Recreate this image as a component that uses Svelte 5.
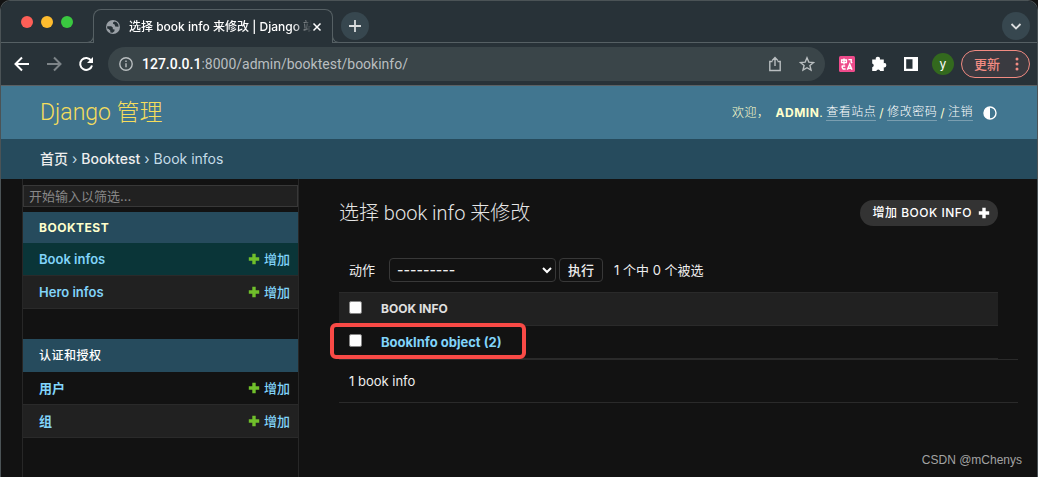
<script lang="ts">
    type Model = { name: string; active?: boolean };
    type AppGroup = { title: string; models: Model[] };

    const apps: AppGroup[] = [
        {
            title: "Booktest",
            models: [{ name: "Book infos", active: true }, { name: "Hero infos" }],
        },
        {
            title: "认证和授权",
            models: [{ name: "用户" }, { name: "组" }],
        },
    ];

    const rows = [{ id: 2, label: "BookInfo object (2)" }];

    let filter = $state("");
    let action = $state("");
    let selected = $state<number[]>([]);

    const allSelected = $derived(selected.length === rows.length);

    function toggleAll() {
        selected = allSelected ? [] : rows.map((row) => row.id);
    }
</script>

{#snippet plus()}
    <svg class="plus" viewBox="0 0 12 12" aria-hidden="true">
        <path d="M4.3.8h3.4v3.5h3.5v3.4H7.7v3.5H4.3V7.7H.8V4.3h3.5z" />
    </svg>
{/snippet}

<div class="window">
    <div class="tab-strip">
        <div class="lights">
            <span class="light close"></span>
            <span class="light minimize"></span>
            <span class="light zoom"></span>
        </div>
        <div class="tab">
            <svg class="globe" viewBox="0 0 16 16" aria-hidden="true">
                <circle cx="8" cy="8" r="7" fill="#9aa0a6" />
                <path
                    d="M2.2 7.2h4l1.6 1.4v1.6l1.8.4-.2 1.6-1.8 1.6-2.2-.4-.2-1.8-1.6-1.6-1.4-.6zM9.6 2.4L8 3.4v1.4l1.6.8.6 1.8 3.4.4-.4-2.6-1.6-2z"
                    fill="#283238"
                />
            </svg>
            <span class="tab-title">选择 book info 来修改 | Django 站</span>
            <button class="tab-close" type="button" aria-label="Close tab">
                <svg viewBox="0 0 10 10"><path d="M1.5 1.5l7 7M8.5 1.5l-7 7" /></svg>
            </button>
        </div>
        <button class="round" type="button" aria-label="New tab">
            <svg viewBox="0 0 14 14"><path d="M7 1v12M1 7h12" /></svg>
        </button>
        <button class="round search-tabs" type="button" aria-label="Search tabs">
            <svg viewBox="0 0 14 14"><path d="M2.5 5L7 9.5 11.5 5" /></svg>
        </button>
    </div>

    <div class="toolbar">
        <button class="nav" type="button" aria-label="Back">
            <svg viewBox="0 0 16 16"><path d="M15 8H2M8 1.5L1.5 8 8 14.5" /></svg>
        </button>
        <button class="nav dim" type="button" aria-label="Forward">
            <svg viewBox="0 0 16 16"><path d="M1 8h13M8 1.5L14.5 8 8 14.5" /></svg>
        </button>
        <button class="nav" type="button" aria-label="Reload">
            <svg viewBox="0 0 16 16">
                <path d="M13.2 4.6A6 6 0 1 0 14 9.4" />
                <path class="solid" d="M15 1v6H9z" />
            </svg>
        </button>

        <div class="address">
            <svg class="info" viewBox="0 0 14 14" aria-hidden="true">
                <circle cx="7" cy="7" r="6.2" />
                <path d="M7 6.2v4M7 3.4v1.5" />
            </svg>
            <span class="url"><b>127.0.0.1</b>:8000/admin/booktest/bookinfo/</span>
            <button class="share" type="button" aria-label="Share">
                <svg viewBox="0 0 14 16">
                    <path d="M4.5 5.5H1.8v9h10.4v-9H9.5M7 10V2M4.2 4.4L7 1.6l2.8 2.8" />
                </svg>
            </button>
            <button class="star" type="button" aria-label="Bookmark">
                <svg viewBox="0 0 16 16">
                    <path
                        d="M8 1.8l1.8 4.3 4.7.4-3.6 3 1.1 4.6L8 11.7 4 14.1l1.1-4.6-3.6-3 4.7-.4z"
                    />
                </svg>
            </button>
        </div>

        <button class="ext" type="button" aria-label="Translate">
            <svg viewBox="0 0 16 16">
                <rect width="16" height="16" rx="1.5" fill="#ee4b8b" />
                <path
                    d="M2.6 4h4.8v2.6H2.6zM5 2.4v6M9.4 3.6h2.8v2.6l1 .8M3.2 9.4v2.2l1 1.4h2.4M3.2 10h3M8.4 13.8l2.3-5.6 2.3 5.6M9.4 12.2h2.8"
                    fill="none"
                    stroke="#fff"
                    stroke-width="1.4"
                />
            </svg>
        </button>
        <button class="ext" type="button" aria-label="Extensions">
            <svg viewBox="0 0 16 16">
                <path
                    d="M1.2 3.4h3.6a2.1 2.1 0 1 1 4.1 0h3.9v3.8a2.1 2.1 0 1 1 0 4.1V15H9.2a2 2 0 0 0-3.9 0H1.2v-3.7a2 2 0 0 0 0-3.9z"
                    fill="#fff"
                />
            </svg>
        </button>
        <button class="ext" type="button" aria-label="Side panel">
            <svg viewBox="0 0 16 16">
                <path d="M1 1h14v14H1zM3.2 3.2v9.6h6.3V3.2z" fill="#fff" fill-rule="evenodd" />
            </svg>
        </button>
        <button class="avatar" type="button">y</button>
        <button class="update" type="button">
            更新
            <svg viewBox="0 0 4 14" aria-hidden="true">
                <circle cx="2" cy="2" r="1.5" />
                <circle cx="2" cy="7" r="1.5" />
                <circle cx="2" cy="12" r="1.5" />
            </svg>
        </button>
    </div>

    <header>
        <a class="brand" href="#home">Django 管理</a>
        <div class="user-tools">
            <span class="welcome">欢迎，</span>
            <strong>Admin</strong>.
            <a href="#site">查看站点</a> /
            <a href="#password">修改密码</a> /
            <a href="#logout">注销</a>
            <button class="theme" type="button" aria-label="Toggle theme">
                <svg viewBox="0 0 14 14">
                    <circle cx="7" cy="7" r="6" fill="none" stroke="#fff" stroke-width="1.4" />
                    <path d="M7 1a6 6 0 0 0 0 12z" fill="#fff" />
                </svg>
            </button>
        </div>
    </header>

    <nav class="breadcrumbs">
        <a href="#home">首页</a> › <a href="#booktest">Booktest</a> › Book infos
    </nav>

    <div class="main">
        <aside>
            <input
                class="filter"
                type="search"
                placeholder="开始输入以筛选..."
                aria-label="筛选导航项"
                bind:value={filter}
            />
            {#each apps as app}
                <table class="module">
                    <caption>{app.title}</caption>
                    <tbody>
                        {#each app.models as model}
                            <tr class:active={model.active}>
                                <th scope="row"><a href="#model">{model.name}</a></th>
                                <td><a href="#add">{@render plus()}增加</a></td>
                            </tr>
                        {/each}
                    </tbody>
                </table>
            {/each}
        </aside>

        <main>
            <div class="title-row">
                <h1>选择 book info 来修改</h1>
                <a class="add-link" href="#add">增加 book info {@render plus()}</a>
            </div>

            <div class="actions">
                <label for="action">动作</label>
                <div class="select-wrap">
                    <select id="action" bind:value={action}>
                        <option value="">---------</option>
                        <option value="delete">删除所选的 book infos</option>
                    </select>
                    <svg viewBox="0 0 10 8" aria-hidden="true"><path d="M1 2l4 4 4-4" /></svg>
                </div>
                <button type="button">执行</button>
                <span class="counter">{rows.length} 个中 {selected.length} 个被选</span>
            </div>

            <table class="results">
                <thead>
                    <tr>
                        <th class="check">
                            <input
                                type="checkbox"
                                aria-label="全选"
                                checked={allSelected}
                                onchange={toggleAll}
                            />
                        </th>
                        <th>Book info</th>
                    </tr>
                </thead>
                <tbody>
                    {#each rows as row}
                        <tr>
                            <td class="check">
                                <input
                                    type="checkbox"
                                    aria-label={row.label}
                                    value={row.id}
                                    bind:group={selected}
                                />
                                <span class="marker"></span>
                            </td>
                            <th><a href="#change">{row.label}</a></th>
                        </tr>
                    {/each}
                </tbody>
            </table>
            <p class="paginator">{rows.length} book info</p>
        </main>
    </div>
    <span class="watermark">CSDN @mChenys</span>
</div>

<style>
    :global(body) {
        background: #121212;
    }

    .window {
        position: relative;
        box-sizing: border-box;
        display: flex;
        flex-direction: column;
        min-height: 100vh;
        overflow: hidden;
        border: 1px solid #4b5356;
        border-bottom: 0;
        border-radius: 10px 10px 0 0;
        background: #121212;
        color: #eee;
        font-family: Inter, "Noto Sans CJK SC", sans-serif;
        font-size: 13px;
        line-height: 20px;
    }

    a {
        color: #81d4fa;
        text-decoration: none;
    }

    button {
        padding: 0;
        border: 0;
        background: none;
        color: inherit;
        font: inherit;
        cursor: pointer;
    }

    svg {
        display: block;
        flex: none;
    }

    /* browser chrome */
    .tab-strip {
        display: flex;
        align-items: flex-end;
        height: 42px;
        box-shadow: inset 0 -1px #566064;
        background: #283238;
    }

    .lights {
        display: flex;
        gap: 8px;
        padding: 0 20px 15px;
    }

    .light {
        width: 12px;
        height: 12px;
        border-radius: 50%;
    }

    .close {
        background: #fe5f57;
    }

    .minimize {
        background: #febc2e;
    }

    .zoom {
        background: #3ac840;
    }

    .tab {
        position: relative;
        box-sizing: border-box;
        display: flex;
        align-items: center;
        width: 240px;
        height: 34px;
        padding: 0 10px 0 11px;
        border: 1px solid #566064;
        border-bottom: 0;
        border-radius: 8px 8px 0 0;
        background: #283238;
    }

    .tab::before,
    .tab::after {
        position: absolute;
        bottom: 0;
        width: 7px;
        height: 7px;
        border-bottom: 1px solid #566064;
        background: #283238;
        content: "";
    }

    .tab::before {
        right: 100%;
        border-right: 1px solid #566064;
        border-bottom-right-radius: 7px;
    }

    .tab::after {
        left: 100%;
        border-left: 1px solid #566064;
        border-bottom-left-radius: 7px;
    }

    .globe {
        width: 16px;
        height: 16px;
        margin-right: 8px;
    }

    .tab-title {
        flex: 1;
        min-width: 0;
        color: #fff;
        font-size: 12px;
        font-weight: 500;
        white-space: nowrap;
        mask-image: linear-gradient(to right, #000 calc(100% - 20px), transparent);
    }

    .tab-close svg {
        width: 10px;
        height: 10px;
        fill: none;
        stroke: #fff;
        stroke-width: 1.5;
    }

    .round {
        display: grid;
        place-items: center;
        width: 28px;
        height: 28px;
        margin: 0 7px 3px 8px;
        border-radius: 50%;
        background: #37474f;
    }

    .round svg {
        width: 14px;
        height: 14px;
        fill: none;
        stroke: #dadcdd;
        stroke-width: 1.8;
    }

    .search-tabs {
        margin-left: auto;
    }

    .toolbar {
        display: flex;
        align-items: center;
        height: 42px;
        padding: 0 7px 0 13px;
        border-bottom: 1px solid #5b6063;
        background: #283238;
    }

    .nav {
        margin-right: 16px;
    }

    .nav svg {
        width: 16px;
        height: 16px;
        fill: none;
        stroke: #fff;
        stroke-width: 2;
    }

    .nav .solid {
        fill: #fff;
        stroke: none;
    }

    .dim svg {
        stroke: #7d8488;
    }

    .address {
        display: flex;
        flex: 1;
        align-items: center;
        height: 34px;
        margin: 0 14px 0 -2px;
        padding: 0 10px 0 11px;
        border-radius: 17px;
        background: #3a4549;
    }

    .address svg {
        fill: none;
        stroke: #b9bec0;
        stroke-width: 1.4;
    }

    .info {
        width: 14px;
        height: 14px;
        margin-right: 9px;
    }

    .url {
        flex: 1;
        color: #b9bec0;
        font-family: Roboto, "Noto Sans CJK SC", sans-serif;
        font-size: 14px;
    }

    .url b {
        color: #fff;
        font-weight: 500;
    }

    .share svg {
        width: 14px;
        height: 16px;
        margin-right: 17px;
    }

    .star svg {
        width: 16px;
        height: 16px;
    }

    .ext {
        margin-right: 16px;
    }

    .ext svg {
        width: 16px;
        height: 16px;
    }

    .avatar {
        width: 22px;
        height: 22px;
        margin: 0 7px 0 -3px;
        border-radius: 50%;
        background: #33691e;
        color: #fff;
        font-size: 12px;
        line-height: 20px;
    }

    .update {
        display: flex;
        align-items: center;
        gap: 15px;
        height: 28px;
        padding: 0 10px 0 12px;
        border: 1px solid #f28b82;
        border-radius: 14px;
        background: #3a3a40;
        color: #f28b82;
        font-weight: 500;
    }

    .update svg {
        width: 4px;
        height: 14px;
        fill: #f28b82;
    }

    /* site header */
    header {
        display: flex;
        align-items: center;
        justify-content: space-between;
        height: 53px;
        padding: 0 40px 0 39px;
        background: #417690;
    }

    .brand {
        color: #f5dd5d;
        font-family: Roboto, "Noto Sans CJK SC", sans-serif;
        font-size: 23px;
        font-weight: 300;
        line-height: 28px;
    }

    .user-tools {
        display: flex;
        align-items: center;
        gap: 3px;
        color: #ffc;
        font-size: 12px;
        letter-spacing: 0.5px;
    }

    .user-tools strong {
        margin-right: -3px;
        text-transform: uppercase;
    }

    .welcome {
        font-weight: 300;
        margin-right: 3px;
    }

    .user-tools a {
        border-bottom: 1px solid #7a9eb0;
        color: #fff;
        font-weight: 300;
        line-height: 16px;
    }

    .theme svg {
        width: 14px;
        height: 14px;
        margin-left: 7px;
    }

    .breadcrumbs {
        height: 20px;
        padding: 10px 39px;
        background: #264b5d;
        color: #c4dce8;
        font-size: 14px;
    }

    .breadcrumbs a {
        color: #eee;
        font-weight: 500;
    }

    .main {
        display: flex;
        flex: 1;
    }

    /* sidebar */
    aside {
        box-sizing: border-box;
        flex: none;
        width: 277px;
        margin-left: 21px;
        padding-top: 6px;
        border: 1px solid #272727;
        border-width: 0 1px;
    }

    .filter {
        box-sizing: border-box;
        display: block;
        width: 100%;
        height: 22px;
        margin-bottom: 5px;
        padding: 0 5px;
        border: 1px solid #383838;
        background: #212121;
        color: #eee;
        font: inherit;
        appearance: none;
    }

    .filter::placeholder {
        color: #888;
    }

    .module {
        width: 100%;
        margin-bottom: 30px;
        border-collapse: collapse;
    }

    .module caption {
        padding: 6px 16px;
        background: #264b5d;
        color: #ffc;
        font-size: 12px;
        font-weight: 700;
        line-height: 19px;
        letter-spacing: 0.5px;
        text-align: left;
        text-transform: uppercase;
    }

    .module + .module caption {
        padding: 7px 16px;
        color: #fff;
        font-weight: 500;
    }

    .module th,
    .module td {
        padding: 6px 8px 6px 16px;
        border-bottom: 1px solid #2a2a2a;
        text-align: left;
    }

    .module th {
        font-weight: 600;
    }

    .module td a {
        display: flex;
        align-items: center;
        justify-content: flex-end;
        gap: 4px;
        font-weight: 500;
    }

    .module tr:nth-child(even) {
        background: #212121;
    }

    .module .active {
        background: #0a3538;
    }

    .plus {
        width: 12px;
        height: 12px;
        fill: #70bf2b;
    }

    /* change list */
    main {
        flex: 1;
        padding: 20px 19px 0 40px;
    }

    .title-row {
        display: flex;
        align-items: center;
        justify-content: space-between;
        margin-right: 20px;
    }

    h1 {
        margin: 0;
        color: #e6e6e6;
        font-family: Roboto, "Noto Sans CJK SC", sans-serif;
        font-size: 20px;
        font-weight: 300;
        line-height: 28px;
    }

    .add-link {
        display: flex;
        align-items: center;
        gap: 6px;
        padding: 3px 8px 3px 12px;
        border-radius: 13px;
        background: #333;
        color: #fff;
        font-size: 12px;
        font-weight: 500;
        letter-spacing: 0.5px;
        text-transform: uppercase;
    }

    .add-link .plus {
        fill: #fff;
    }

    .actions {
        display: flex;
        align-items: center;
        gap: 3px;
        padding: 31px 10px 10px;
    }

    .actions label {
        margin-right: 11px;
    }

    .select-wrap {
        position: relative;
    }

    .select-wrap svg {
        position: absolute;
        top: 8px;
        right: 4px;
        width: 10px;
        height: 8px;
        fill: none;
        stroke: #fff;
        stroke-width: 2;
        pointer-events: none;
    }

    .actions select {
        display: block;
        width: 167px;
        height: 24px;
        padding: 0 7px;
        border: 1px solid #383838;
        border-radius: 4px;
        background: #121212;
        color: #eee;
        font: inherit;
        font-size: 14px;
        font-weight: 500;
        appearance: none;
    }

    .actions button {
        height: 24px;
        padding: 0 8px;
        border: 1px solid #383838;
        border-radius: 4px;
        font-weight: 500;
    }

    .counter {
        margin-left: 8px;
    }

    .results {
        width: calc(100% - 20px);
        border-collapse: collapse;
    }

    .results th,
    .results td {
        padding: 6px 10px;
        border-bottom: 1px solid #2a2a2a;
        text-align: left;
    }

    .results thead th {
        border-top: 1px solid #2a2a2a;
        background: #212121;
        color: #e0e0e0;
        font-size: 12px;
        font-weight: 700;
        text-transform: uppercase;
    }

    .results .check {
        position: relative;
        width: 13px;
        padding-right: 9px;
    }

    .results input {
        display: block;
        width: 13px;
        height: 13px;
        margin: 0 0 4px;
    }

    .results input:not(:checked) {
        border: 1px solid #858585;
        border-radius: 2px;
        background: #fff;
        appearance: none;
    }

    .marker {
        position: absolute;
        top: -3px;
        left: -9px;
        box-sizing: border-box;
        width: 196px;
        height: 36px;
        border: 4px solid #f94a46;
        border-radius: 6px;
        pointer-events: none;
    }

    .paginator {
        margin: 0;
        padding: 11px 10px;
        border: 1px solid #2a2a2a;
        border-width: 1px 0;
    }

    .watermark {
        position: absolute;
        right: 15px;
        bottom: 7px;
        color: #a3a3a3;
        font-family: "Liberation Sans", sans-serif;
        font-size: 12px;
    }
</style>
